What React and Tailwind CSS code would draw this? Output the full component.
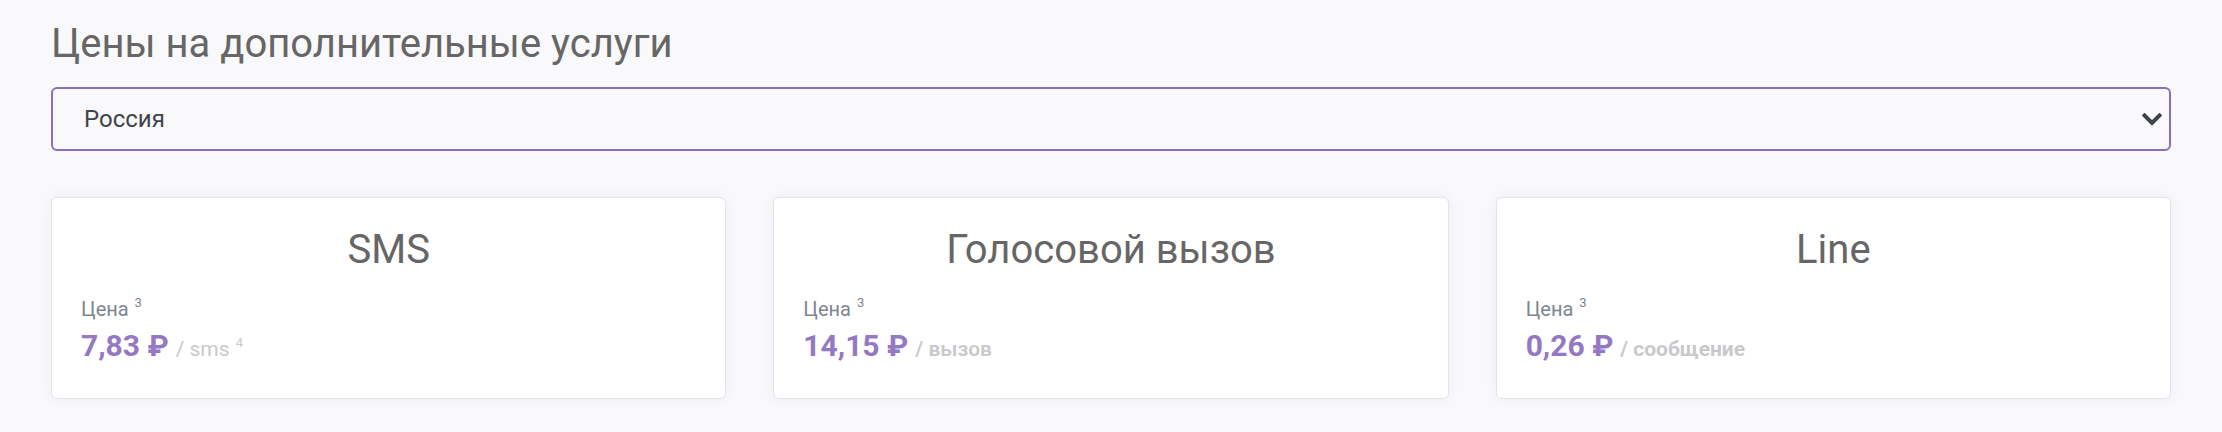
import React from "react";

const cards = [
  { title: "SMS", price: "7,83 ₽", unit: "sms", unitSup: "4", unitWeight: "font-normal" },
  { title: "Голосовой вызов", price: "14,15 ₽", unit: "вызов", unitSup: null, unitWeight: "font-semibold" },
  { title: "Line", price: "0,26 ₽", unit: "сообщение", unitSup: null, unitWeight: "font-bold" },
];

function Chevron() {
  return (
    <svg width="20" height="13" viewBox="0 0 20 13" fill="none">
      <path d="M2.5 2.5 L10 10 L17.5 2.5" stroke="#3f454d" strokeWidth="4" strokeLinecap="square" strokeLinejoin="miter" />
    </svg>
  );
}

function Card({ c }) {
  return (
    <div className="flex-1 bg-white border border-[#e4e3e8] rounded-[6px] shadow-[0_0_14px_rgba(40,30,70,0.05)] px-[29px] pt-[28px] h-[202px]">
      <div className="text-center text-[40px] leading-[48px] text-[#666666]">{c.title}</div>
      <div className="mt-[23px] text-[20px] leading-[24px] text-[#7d8691]">
        Цена <sup className="text-[13px] text-[#7d8691] relative top-[-9px] ml-[1px]">3</sup>
      </div>
      <div className="mt-[7px] flex items-baseline leading-[36px]">
        <span className="text-[30px] font-bold text-[#9479c2]">{c.price}</span>
        <span className={`ml-[7px] text-[21px] text-[#c9c9cb] ${c.unitWeight}`}>
          / {c.unit}
          {c.unitSup && <sup className="ml-[6px] text-[13px] font-normal text-[#c9c9cb] relative top-[-9px]">{c.unitSup}</sup>}
        </span>
      </div>
    </div>
  );
}

export default function App() {
  return (
    <div className="w-[2222px] h-[432px] bg-[#f9f8fb] px-[51px] pt-[20px] font-['Roboto',sans-serif]">
      <h1 className="text-[40px] leading-[48px] text-[#666666] font-normal">Цены на дополнительные услуги</h1>
      <div className="mt-[19px] h-[64px] border-2 border-[#8a6fba] rounded-[6px] flex items-center justify-between pl-[31px] pr-[7px]">
        <span className="text-[24px] text-[#3e444b]">Россия</span>
        <Chevron />
      </div>
      <div className="mt-[46px] flex gap-[47px]">
        {cards.map((c) => (
          <Card key={c.title} c={c} />
        ))}
      </div>
    </div>
  );
}
